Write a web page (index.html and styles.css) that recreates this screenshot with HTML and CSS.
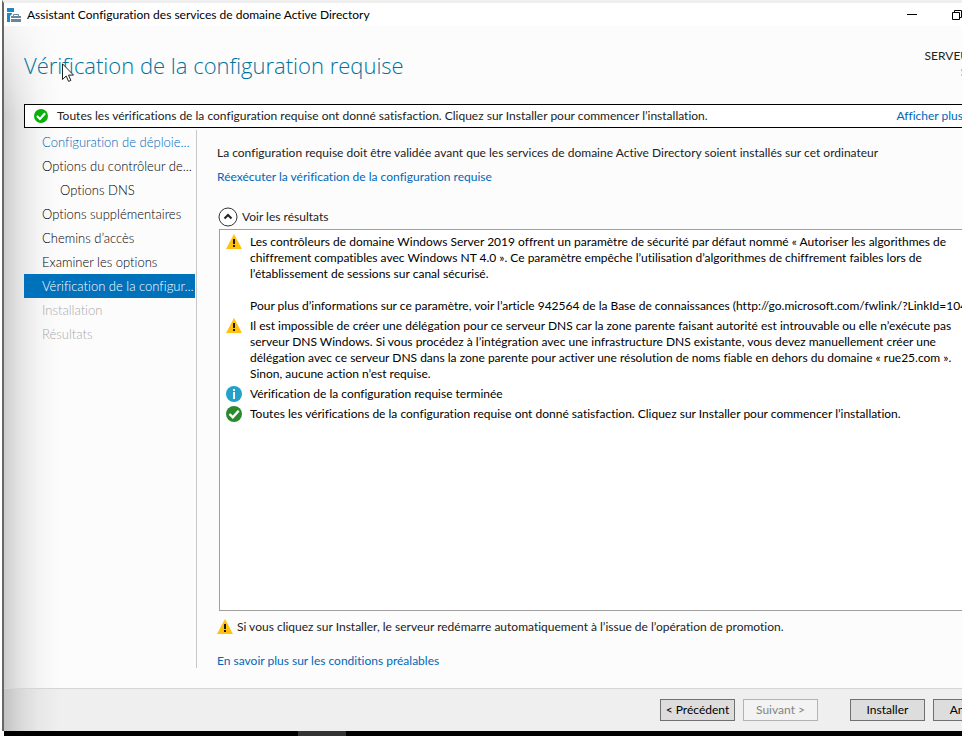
FILE: index.html
```html
<!DOCTYPE html>
<html lang="fr">
<head>
<meta charset="utf-8">
<title>Assistant Configuration des services de domaine Active Directory</title>
<link rel="stylesheet" href="styles.css">
</head>
<body>
<svg class="defs" aria-hidden="true">
  <symbol id="warning" viewBox="0 0 16 16">
    <path d="M8 0 16 15H0Z" fill="#ffc20e"/>
    <path d="M7 5h2v5H7zM7 11h2v2H7z" fill="#1d1700"/>
  </symbol>
  <symbol id="info" viewBox="0 0 16 16">
    <circle cx="8" cy="8" r="8" fill="#22a2c8"/>
    <path d="M7 3h2v2H7zM7 6h2v7H7z" fill="#fff"/>
  </symbol>
  <symbol id="check" viewBox="0 0 16 16">
    <circle cx="8" cy="8" r="8" fill="currentColor"/>
    <path d="M3.500 8 6.800 11.300 12.700 4.800" fill="none" stroke="#fff" stroke-width="2.400"/>
  </symbol>
</svg>
<div class="window">
  <header class="titlebar">
    <svg class="app-icon" viewBox="0 0 14 14" aria-hidden="true">
      <path d="M0 0h7v4H0zM0 5h5v1L3 8v6H0z" fill="#1e88c9"/>
      <path d="M4 8h10v2H4zM4 11h10v3H4z" fill="#66879c"/>
      <path d="M6.500 8V6.500h5V8" fill="none" stroke="#66879c"/>
    </svg>
    <span class="caption">Assistant Configuration des services de domaine Active Directory</span>
    <button class="win-button" aria-label="Réduire"><svg viewBox="0 0 10 10"><path d="M0 4.500h10" stroke="#000"/></svg></button>
    <button class="win-button" aria-label="Restaurer"><svg viewBox="0 0 10 10"><path d="M.5 2.500h7v7h-7zM2.500 2.500v-2h7v7h-2" fill="none" stroke="#000"/></svg></button>
  </header>
  <div class="heading">
    <h1>Vérification de la configuration requise</h1>
    <div class="server"><div>SERVEUR CIBLE</div><div class="server-name">SRV-AD</div></div>
  </div>
  <div class="banner">
    <svg class="banner-icon"><use href="#check"/></svg>
    <span>Toutes les vérifications de la configuration requise ont donné satisfaction. Cliquez sur Installer pour commencer l’installation.</span>
    <a class="more" href="#">Afficher plus</a>
  </div>
  <div class="content">
    <nav class="steps">
      <a class="link" href="#">Configuration de déploie...</a>
      <a href="#">Options du contrôleur de...</a>
      <a class="nested" href="#">Options DNS</a>
      <a href="#">Options supplémentaires</a>
      <a href="#">Chemins d’accès</a>
      <a href="#">Examiner les options</a>
      <a class="current" href="#">Vérification de la configur...</a>
      <a class="disabled">Installation</a>
      <a class="disabled">Résultats</a>
    </nav>
    <main>
      <p>La configuration requise doit être validée avant que les services de domaine Active Directory soient installés sur cet ordinateur</p>
      <a href="#">Réexécuter la vérification de la configuration requise</a>
      <button class="toggle">
        <svg viewBox="0 0 20 20" aria-hidden="true"><circle cx="10" cy="10" r="9" fill="#fff" stroke="#333"/><path d="M6.500 11.500 10 8l3.500 3.500" fill="none" stroke="#222" stroke-width="2"/></svg>
        Voir les résultats
      </button>
      <ul class="results">
        <li><svg><use href="#warning"/></svg><div>Les contrôleurs de domaine Windows Server 2019 offrent un paramètre de sécurité par défaut nommé « Autoriser les algorithmes de<br>chiffrement compatibles avec Windows NT 4.0 ». Ce paramètre empêche l’utilisation d’algorithmes de chiffrement faibles lors de<br>l’établissement de sessions sur canal sécurisé.<br><br>Pour plus d’informations sur ce paramètre, voir l’article 942564 de la Base de connaissances (http://go.microsoft.com/fwlink/?LinkId=104751).</div></li>
        <li><svg><use href="#warning"/></svg><div>Il est impossible de créer une délégation pour ce serveur DNS car la zone parente faisant autorité est introuvable ou elle n’exécute pas<br>serveur DNS Windows. Si vous procédez à l’intégration avec une infrastructure DNS existante, vous devez manuellement créer une<br>délégation avec ce serveur DNS dans la zone parente pour activer une résolution de noms fiable en dehors du domaine « rue25.com ».<br>Sinon, aucune action n’est requise.</div></li>
        <li><svg><use href="#info"/></svg><div>Vérification de la configuration requise terminée</div></li>
        <li><svg class="ok"><use href="#check"/></svg><div>Toutes les vérifications de la configuration requise ont donné satisfaction. Cliquez sur Installer pour commencer l’installation.</div></li>
      </ul>
      <p class="notice"><svg><use href="#warning"/></svg>Si vous cliquez sur Installer, le serveur redémarre automatiquement à l’issue de l’opération de promotion.</p>
      <a href="#">En savoir plus sur les conditions préalables</a>
    </main>
  </div>
  <footer>
    <button>&lt; Précédent</button>
    <button disabled>Suivant &gt;</button>
    <button class="install">Installer</button>
    <button>Annuler</button>
  </footer>
  <svg class="pointer" viewBox="0 0 12 19" aria-hidden="true"><path d="M.5.8v15.700l3.700-3.500 2.400 5.400 2.300-1-2.400-5.300h5z" fill="#fff" stroke="#222"/></svg>
</div>
<div class="taskbar"><div class="task"></div></div>
</body>
</html>
```
FILE: styles.css
```css
* { box-sizing: border-box; }
body {
  margin: 0;
  height: 100vh;
  overflow: hidden;
  display: flex;
  flex-direction: column;
  background: #fff;
  color: #222;
  font: 12px/16px Lato, "Open Sans", sans-serif;
  font-variant-ligatures: none;
  white-space: nowrap;
}
p, h1, ul { margin: 0; padding: 0; }
a { color: #0067b8; text-decoration: none; }
button { font: inherit; color: #000; padding: 0; }
.defs { position: absolute; width: 0; height: 0; }

.window {
  position: relative;
  isolation: isolate;
  flex: 1;
  min-height: 0;
  margin: 0 -64px 0 2px;
  display: flex;
  flex-direction: column;
  border-left: 2px solid #666;
  border-top: 3px solid #efefef;
  background: linear-gradient(#fcfcfc calc(100% - 43px), #efefef calc(100% - 43px));
}
.window::before {
  content: "";
  position: absolute;
  z-index: -1;
  inset: 23px auto 0 0;
  width: 56px;
  background: linear-gradient(90deg, rgba(0,0,0,.19), rgba(0,0,0,.1) 25%, rgba(0,0,0,.03) 60%, transparent);
  mask-image: linear-gradient(rgba(0,0,0,.2), #000 90px);
  pointer-events: none;
}
.titlebar {
  height: 23px;
  display: flex;
  align-items: center;
  padding: 0 24px 0 3px;
  background: #fff;
  color: #000;
}
.app-icon { width: 14px; height: 14px; }
.caption { flex: 1; margin-left: 6px; }
.win-button { width: 45px; height: 20px; border: 0; background: none; }
.win-button svg { width: 10px; height: 10px; display: block; margin: auto; }
.win-button:last-child { margin-right: 23px; }

.heading {
  height: 78px;
  display: flex;
  justify-content: space-between;
  padding: 22px 14px 0 20px;
}
h1 { font: 300 22px/34px "Open Sans", sans-serif; color: #00739c; }
.server { text-align: right; }
.server-name { margin-right: 8px; color: #b06b1a; }

.banner {
  height: 24px;
  display: flex;
  align-items: center;
  margin: 0 16px 0 20px;
  padding: 0 46px 0 9px;
  border: 1px solid #000;
  background: #fff;
}
.banner-icon { width: 14px; height: 14px; margin-right: 9px; color: #09b00b; }
.more { margin-left: auto; }

.content { flex: 1; min-height: 0; display: flex; padding: 2px 0 20px 20px; }
.steps { width: 173px; display: flex; flex-direction: column; border-right: 1px solid #c8c8c8; padding-right: 1px; font-size: 13px; font-weight: 300; }
.steps a { line-height: 24px; padding-left: 18px; color: #000; }
.steps .link { color: #0067b8; }
.steps .nested { padding-left: 36px; }
.steps .current { background: #0072bc; color: #fff; }
.steps .disabled { color: #aaa; }

main {
  flex: 1;
  min-width: 0;
  display: flex;
  flex-direction: column;
  align-items: flex-start;
  gap: 8px;
  margin-bottom: -1px;
  padding: 15px 16px 0 20px;
}
.toggle { display: flex; align-items: center; gap: 4px; margin: 14px 0 0 1px; border: 0; background: none; color: #222; }
.toggle svg { width: 20px; height: 20px; }
.results {
  flex: 1;
  align-self: stretch;
  min-height: 0;
  margin: -6px 0 0 2px;
  padding: 4px 6px;
  overflow: hidden;
  list-style: none;
  border: 1px solid #a0a0a0;
  background: #fff;
  color: #000;
}
.results li { display: flex; gap: 8px; margin-bottom: 4px; }
.results svg, .notice svg { width: 16px; height: 16px; flex: none; }
.ok { color: #2a8a2d; }
.notice { display: flex; gap: 4px; margin-bottom: 10px; }

footer {
  height: 43px;
  display: flex;
  justify-content: flex-end;
  gap: 8px;
  padding: 10px 18px 0 0;
  border-top: 1px solid #d5d5d5;
}
footer button { width: 75px; height: 22px; border: 1px solid #707070; background: #ddd; }
footer button:disabled { border-color: #b0b4b5; background: #f3f3f3; color: #838383; }
.install { margin-left: 24px; }
.pointer { position: absolute; left: 58px; top: 60px; width: 12px; height: 19px; }
.taskbar { height: 5px; margin-left: 4px; background: #000; }
.task { width: 48px; height: 5px; margin-left: 294px; background: #333; }
```
